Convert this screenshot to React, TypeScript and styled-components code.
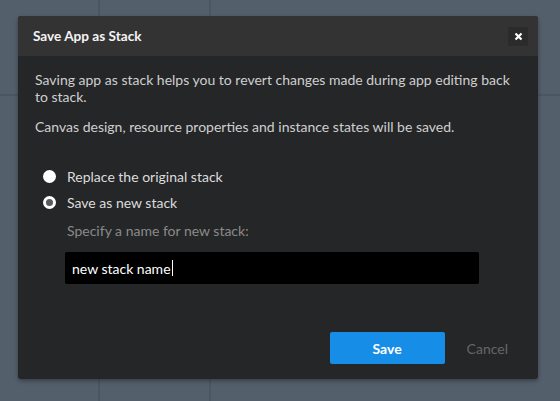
import React from "react";
import styled, { createGlobalStyle } from "styled-components";

const Global = createGlobalStyle`
  html, body { margin: 0; padding: 0; }
  body {
    width: 560px;
    height: 401px;
    overflow: hidden;
    font-family: Lato, "Open Sans", sans-serif;
    background-color: #545f6c;
    background-image:
      linear-gradient(to right, transparent 98px, #4b5662 98px, #4b5662 100px, transparent 100px),
      linear-gradient(to right, transparent 209px, #4b5662 209px, #4b5662 211px, transparent 211px),
      linear-gradient(to bottom, transparent 94px, #4b5662 94px, #4b5662 96px, transparent 96px);
    background-repeat: no-repeat;
  }
`;

const Stage = styled.div`
  padding: 16px 22px 0 18px;
`;

const Dialog = styled.div`
  width: 520px;
  height: 363px;
  display: flex;
  flex-direction: column;
  background: #252628;
  border-radius: 3px;
  box-shadow: 0 2px 4px rgba(0, 0, 0, 0.35);
  overflow: hidden;
`;

const Header = styled.div`
  height: 40px;
  flex: none;
  display: flex;
  align-items: center;
  justify-content: space-between;
  padding: 0 10px 0 15px;
  background: #333333;
`;

const Title = styled.h1`
  margin: 0;
  font-size: 13.6px;
  font-weight: 700;
  color: #f4f4f4;
`;

const Close = styled.button`
  width: 20px;
  height: 19px;
  border: 0;
  padding: 0;
  background: #2b2b2b;
  color: #ffffff;
  display: flex;
  align-items: center;
  justify-content: center;
`;

const Body = styled.div`
  flex: 1;
  display: flex;
  flex-direction: column;
  padding: 15px 17px 15px 17px;
`;

const Para = styled.p`
  margin: 0 0 13px 0;
  font-size: 14px;
  line-height: 17px;
  color: #cfcfcf;
`;

const Options = styled.div`
  display: flex;
  flex-direction: column;
  margin-top: 15px;
  padding-left: 8px;
`;

const RadioRow = styled.label`
  height: 26px;
  display: flex;
  align-items: center;
  gap: 11px;
  font-size: 14px;
  color: #dcdcdc;
`;

const Radio = styled.span<{ $checked?: boolean }>`
  width: 13px;
  height: 13px;
  border-radius: 50%;
  box-sizing: border-box;
  background: ${(p) => (p.$checked ? "#5a5a5a" : "#ffffff")};
  border: ${(p) => (p.$checked ? "3px solid #ffffff" : "none")};
  flex: none;
`;

const Sub = styled.div`
  padding-left: 32px;
  display: flex;
  flex-direction: column;
`;

const Hint = styled.div`
  margin-top: 7px;
  font-size: 14px;
  line-height: 18px;
  color: #8a8a8a;
`;

const Input = styled.div`
  margin-top: 12px;
  margin-left: -2px;
  width: 414px;
  height: 32px;
  box-sizing: border-box;
  background: #000000;
  border-radius: 2px;
  padding: 0 7px;
  display: flex;
  align-items: center;
  font-size: 14px;
  color: #ffffff;
`;

const Caret = styled.span`
  width: 1px;
  height: 16px;
  background: #ffffff;
  margin-left: 1px;
`;

const Footer = styled.div`
  margin-top: auto;
  display: flex;
  align-items: center;
  justify-content: flex-end;
  gap: 22px;
  padding-right: 13px;
`;

const Primary = styled.button`
  width: 115px;
  height: 32px;
  border: 0;
  border-radius: 2px;
  background: #168ee8;
  color: #ffffff;
  font-family: Lato, sans-serif;
  font-size: 14px;
  font-weight: 700;
`;

const Link = styled.span`
  font-size: 14px;
  color: #666666;
`;

export default function App() {
  return (
    <>
      <Global />
      <Stage>
        <Dialog>
          <Header>
            <Title>Save App as Stack</Title>
            <Close aria-label="close">
              <svg width="9" height="9" viewBox="0 0 9 9">
                <path d="M1.5 1.5L7.5 7.5M7.5 1.5L1.5 7.5" stroke="#fff" strokeWidth="2.2" />
              </svg>
            </Close>
          </Header>
          <Body>
            <Para>
              Saving app as stack helps you to revert changes made during app editing back to stack.
            </Para>
            <Para>Canvas design, resource properties and instance states will be saved.</Para>
            <Options>
              <RadioRow>
                <Radio />
                Replace the original stack
              </RadioRow>
              <RadioRow>
                <Radio $checked />
                Save as new stack
              </RadioRow>
            </Options>
            <Sub>
              <Hint>Specify a name for new stack:</Hint>
              <Input>
                new stack name
                <Caret />
              </Input>
            </Sub>
            <Footer>
              <Primary>Save</Primary>
              <Link>Cancel</Link>
            </Footer>
          </Body>
        </Dialog>
      </Stage>
    </>
  );
}
